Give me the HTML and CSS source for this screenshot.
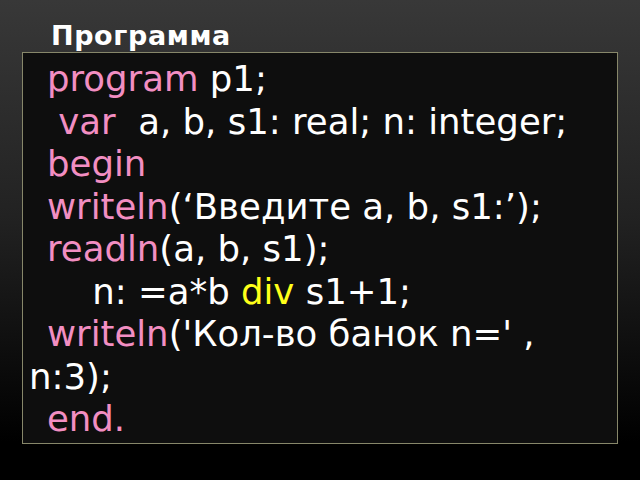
FILE: index.html
```html
<!DOCTYPE html>
<html>
<head>
<meta charset="utf-8">
<link rel="stylesheet" href="styles.css">
</head>
<body>
<h1 class="title">Программа</h1>
<div class="code">
<p class="line"><span class="kw">program</span> p1;</p>
<p class="line">&nbsp;<span class="kw">var</span>&nbsp; a, b, s1: real; n: integer;</p>
<p class="line"><span class="kw">begin</span></p>
<p class="line"><span class="kw">writeln</span>(‘Введите a, b, s1:’);</p>
<p class="line"><span class="kw">readln</span>(a, b, s1);</p>
<p class="line">&nbsp;&nbsp;&nbsp;&nbsp;n: =a*b <span class="op">div</span> s1+1;</p>
<p class="line"><span class="kw">writeln</span>('Кол-во банок n=' ,<br>n:3);</p>
<p class="line"><span class="kw">end.</span></p>
</div>
</body>
</html>
```
FILE: styles.css
```css
html, body {
  margin: 0;
  padding: 0;
  width: 640px;
  height: 480px;
  overflow: hidden;
}
body {
  background: linear-gradient(to bottom, #383838 0%, #222 45%, #000 92%);
  font-family: "DejaVu Sans", sans-serif;
  color: #fff;
}
.title {
  margin: 0;
  padding: 19.5px 0 0 51px;
  height: 32.5px;
  font-size: 27px;
  line-height: 31px;
  font-weight: bold;
  letter-spacing: 0.6px;
  color: #fff;
  box-sizing: content-box;
}
.code {
  margin: 0 22px 0 22px;
  border: 1.5px solid #87876a;
  background: #0e0e0e;
  padding: 5px 6px 0 6px;
  box-sizing: border-box;
  height: 392px;
}
.line {
  margin: 0;
  font-size: 35.5px;
  line-height: 42.5px;
  text-indent: 18px;
  white-space: nowrap;
}
.kw { color: #f28ec2; }
.op { color: #ffff1a; }
```
